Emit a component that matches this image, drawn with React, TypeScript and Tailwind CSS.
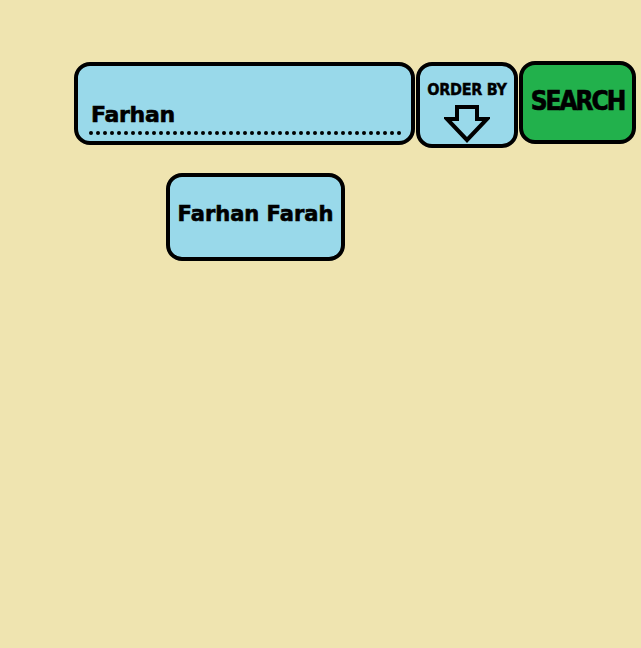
import React from 'react';

const dots = Array.from({ length: 45 });

function ArrowDown() {
  return (
    <svg width="46" height="38" viewBox="0 0 46 38" className="block">
      <path
        d="M13 2 H33 V14 H43 L23 35 L3 14 H13 Z"
        fill="none"
        stroke="#000"
        strokeWidth="4"
        strokeLinejoin="miter"
      />
    </svg>
  );
}

export default function App() {
  return (
    <div className="min-h-[648px] w-full bg-[#efe4b0] pl-[74px] pt-[61px] font-['DejaVu_Sans',sans-serif] text-black">
      <div className="flex items-start gap-[1px]">
        <div className="mt-[1px] flex h-[83px] w-[341px] flex-col justify-end rounded-[16px] border-4 border-black bg-[#99d9ea] px-[8px] pb-[6px]">
          <span className="pl-[5px] text-[22px] font-bold leading-none tracking-[-0.3px] [-webkit-text-stroke:0.6px_#000]">Farhan</span>
          <div className="mt-[5px] flex gap-[3px] pl-[3px]">
            {dots.map((_, i) => (
              <span key={i} className="h-[4px] w-[4px] shrink-0 rounded-full bg-black" />
            ))}
          </div>
        </div>
        <div className="mt-[1px] flex h-[86px] w-[102px] flex-col items-center rounded-[16px] border-4 border-black bg-[#99d9ea] pt-[16px]">
          <span className="font-['DejaVu_Sans_Condensed','DejaVu_Sans',sans-serif] text-[16px] font-bold leading-none tracking-[-0.3px] [-webkit-text-stroke:0.4px_#000]">
            ORDER BY
          </span>
          <div className="mt-[7px]">
            <ArrowDown />
          </div>
        </div>
        <div className="flex h-[83px] w-[117px] items-center justify-center rounded-[16px] border-4 border-black bg-[#22b14c] pb-[3px]">
          <span className="font-['DejaVu_Sans_Condensed','DejaVu_Sans',sans-serif] text-[26px] font-bold leading-none tracking-[-2px] [-webkit-text-stroke:0.6px_#000]">
            SEARCH
          </span>
        </div>
      </div>
      <div className="ml-[92px] mt-[25px] flex h-[88px] w-[179px] items-center justify-center rounded-[16px] border-4 border-black bg-[#99d9ea] pb-[5px]">
        <span className="whitespace-nowrap text-[21px] font-bold leading-none [-webkit-text-stroke:0.6px_#000]">Farhan Farah</span>
      </div>
    </div>
  );
}
